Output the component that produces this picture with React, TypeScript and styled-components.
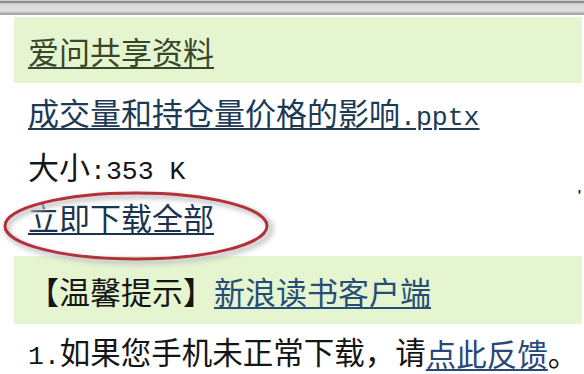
import React from "react";
import styled, { createGlobalStyle } from "styled-components";

const Global = createGlobalStyle`
  html, body { margin: 0; padding: 0; background: #fff; }
  body { width: 584px; height: 374px; overflow: hidden; }
`;

const Page = styled.div`
  width: 584px;
  height: 374px;
  overflow: hidden;
  display: flex;
  flex-direction: column;
  font-family: "Noto Sans CJK SC", "Noto Sans", sans-serif;
  font-size: 31px;
  color: #151515;
`;

const TopBar = styled.div`
  height: 15px;
  flex: none;
  background: linear-gradient(
    to bottom,
    #ffffff 0px,
    #9a9a9a 1px,
    #7d7d7d 2px,
    #d6d6d6 4px,
    #e2e2e2 10px,
    #cfcfcf 12px,
    #9c9c9c 14px,
    #b8b8b8 15px
  );
`;

const Band = styled.div<{ $h: number; $mt?: number }>`
  flex: none;
  height: ${(p) => p.$h}px;
  margin: ${(p) => p.$mt ?? 0}px 2px 0 14px;
  padding-left: 14px;
  background: #e5f5cf;
  display: flex;
  align-items: center;
  white-space: nowrap;
`;

const Row = styled.div<{ $h: number; $fs?: number; $pt?: number }>`
  position: relative;
  flex: none;
  height: ${(p) => p.$h}px;
  padding-left: 28px;
  padding-top: ${(p) => p.$pt ?? 0}px;
  box-sizing: border-box;
  display: flex;
  align-items: center;
  white-space: nowrap;
  line-height: 1;
  font-size: ${(p) => p.$fs ?? 31}px;
`;

const Link = styled.a<{ $c: string }>`
  color: ${(p) => p.$c};
  text-decoration: underline;
  text-decoration-thickness: 2px;
  text-underline-offset: 3px;
  line-height: 1;
  cursor: pointer;
`;

const Plain = styled.span`
  line-height: 1;
`;

const Mono = styled.span`
  font-family: "Liberation Mono", monospace;
  font-size: 26.5px;
`;

const Ellipse = styled.svg`
  position: absolute;
  left: 0;
  top: 0;
  width: 274px;
  height: 74px;
  pointer-events: none;
  overflow: visible;
`;

const Speck = styled.span`
  position: absolute;
  right: 3px;
  top: -2px;
  font-family: "Liberation Sans", sans-serif;
  font-size: 14px;
  font-weight: bold;
  color: #222;
`;

export default function App() {
  return (
    <>
      <Global />
      <Page>
        <TopBar />
        <Band $h={66} $mt={2}>
          <Link $c="#37472a">爱问共享资料</Link>
        </Band>
        <Row $h={62}>
          <Link $c="#1c3956">
            成交量和持仓量价格的影响<Mono>.pptx</Mono>
          </Link>
        </Row>
        <Row $h={45}>
          <Plain>
            大小<Mono>:353 K</Mono>
          </Plain>
        </Row>
        <Row $h={53}>
          <Speck>'</Speck>
          <Link $c="#1a3450">立即下载全部</Link>
          <Ellipse viewBox="0 0 274 74">
            <defs>
              <filter id="sh" x="-10%" y="-20%" width="120%" height="140%">
                <feGaussianBlur stdDeviation="2.5" />
              </filter>
            </defs>
            <ellipse
              cx="139"
              cy="39"
              rx="132"
              ry="33"
              fill="none"
              stroke="#c4c4c4"
              strokeWidth="5"
              filter="url(#sh)"
            />
            <ellipse
              cx="136"
              cy="36"
              rx="131"
              ry="33"
              fill="none"
              stroke="#b3313b"
              strokeWidth="3"
            />
          </Ellipse>
        </Row>
        <Band $h={68} $mt={13}>
          <Plain>【温馨提示】</Plain>
          <Link $c="#264d78">新浪读书客户端</Link>
        </Band>
        <Row $h={50} $pt={8} $fs={30.5}>
          <Plain>
            <Mono>1.</Mono>如果您手机未正常下载，请
          </Plain>
          <Link $c="#284878">点此反馈</Link>
          <Plain>。</Plain>
        </Row>
      </Page>
    </>
  );
}
